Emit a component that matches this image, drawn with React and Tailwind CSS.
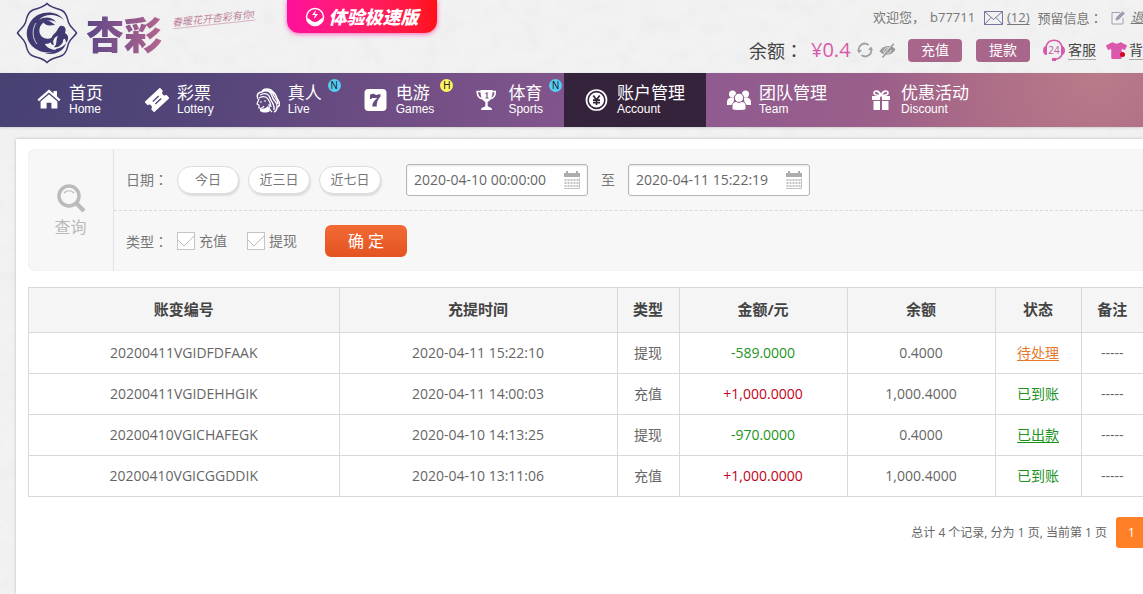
import React from 'react';
import { FaTshirt } from 'react-icons/fa';

function Texture() {
  return (
    <svg className="pointer-events-none absolute inset-0 h-full w-full opacity-50" aria-hidden="true">
      <filter id="paper" x="0" y="0" width="100%" height="100%">
        <feTurbulence type="fractalNoise" baseFrequency="0.05 0.06" numOctaves="4" seed="8" />
        <feColorMatrix values="0 0 0 0 0.84  0 0 0 0 0.84  0 0 0 0 0.84  2.4 0 0 0 -0.8" />
      </filter>
      <rect width="100%" height="100%" filter="url(#paper)" />
    </svg>
  );
}

function Emblem() {
  return (
    <svg className="size-[62px] shrink-0" viewBox="0 0 62 62" aria-hidden="true">
      <path
        d="M31 1.500C35 6 41 6 46 8.500C51 11 51 16 52.500 20.500C54 25 58 27 60.500 31C58 35 54 37 52.500 41.500C51 46 51 51 46 53.500C41 56 35 56 31 60.500C27 56 21 56 16 53.500C11 51 11 46 9.500 41.500C8 37 4 35 1.500 31C4 27 8 25 9.500 20.500C11 16 11 11 16 8.500C21 6 27 6 31 1.500Z"
        fill="none" stroke="#3f3a72" strokeWidth="1.500"
      />
      <path
        d="M48 18C41 8 23 8 15 19C6 32 12 46 27 50C32 51 38 50 42 48C36 48 31 46 29 42C34 42 38 39 39 33C37 36 32 38 28 36C22 33 22 25 27 21C30 18 36 18 40 20C37 15 28 14 23 18C28 12 40 11 48 18Z"
        fill="#3f3a72"
      />
      <path
        d="M44 24C48 23 51 26 49 31C53 33 53 38 50 41C50 36 47 35 47 40C45 43 43 46 38 45C42 42 39 39 42 34C38 35 36 39 38 43C33 43 34 36 38 32C41 30 41 27 44 24Z"
        fill="#3f3a72"
      />
      <path d="M27 20C31 17 36 20 39 23C34 23 31 25 27 20ZM40 47C45 46 48 44 50 41C48 50 37 54 29 51C34 51 38 50 40 47Z" fill="#3f3a72" />
      <path d="M20 21C16 27 16 36 21 42M33 45C31 44 30 43 29 42" fill="none" stroke="#f0f0f0" strokeWidth="0.800" />
    </svg>
  );
}

function HomeIcon() {
  return (
    <svg viewBox="0 0 24 24" className="size-6" fill="currentColor" aria-hidden="true">
      <path d="M12 1.500 0.500 11.500 2 13.200 12 4.600 22 13.200 23.500 11.500 20 8.400V3h-3.500v2.400Z" />
      <path d="M12 6.200 3.600 13.500V20.600h6v-5.800h4.800v5.800h6v-7.100Z" />
    </svg>
  );
}
function TicketIcon() {
  return (
    <svg viewBox="0 0 24 24" className="size-6" aria-hidden="true">
      <g transform="rotate(-43 12 12)">
        <path fill="#fff" d="M1.500 5h21v4.500a2.500 2.500 0 0 0 0 5v4.500h-21v-4.500a2.500 2.500 0 0 0 0-5Z" />
        <path d="M8 10.200h8M8 13.800h8" stroke="#544579" strokeWidth="1.400" />
      </g>
    </svg>
  );
}
function LiveIcon() {
  return (
    <svg viewBox="0 0 26 27" className="h-[27px] w-[26px] max-w-none shrink-0" fill="none" stroke="#fff" aria-hidden="true">
      <path d="M3 12C1 8 3 5 7 5c1-4 8-4 11 0 4 2 3 6 5 8 3 4 1 7-1 7 0 2-1 4-3 5" strokeWidth="1.500" />
      <path d="M7 5c5-3 9 0 10 4 1 5 5 5 5 10M5 8c5-3 9-1 10 3 1 4 5 5 4 12M4 11c4-2 7-2 9 1 2 3 3 5 3 8M8 3c5-1 10 2 11 6 2 3 4 4 4 8" strokeWidth="1.300" />
      <path d="M4 12 2 17l2 1v3c3 1 4 0 5-2M9 14l2 0M5 15l2 0M14 17c0 5 1 6 3 8" strokeWidth="1.200" />
      <path d="M5 21c3 2 6 0 8-2l2 5c-3 2-7 2-10 0Z" fill="#fff" stroke="none" />
    </svg>
  );
}
function SevenIcon() {
  return (
    <svg viewBox="0 0 24 24" className="size-6" aria-hidden="true">
      <rect x="0.500" y="1" width="22" height="22" rx="4" fill="#fff" />
      <path d="M6 6.500h1.200c.6-.8 2-.8 3.300-.2 1.700.8 2.700.8 4 0h2v2.200c-3 3.300-4 6-3.800 10H8.300c0-3.700 2-6 5.300-8.400-2.600.5-5.500-1-6.400.9H6Z" fill="#664b83" />
    </svg>
  );
}
function TrophyIcon() {
  return (
    <svg viewBox="0 0 24 24" className="size-6" aria-hidden="true">
      <path d="M5.500 3.500H1.200c0 4.500 2.300 7 5.800 7.300M15.500 3.500h3.800c0 4.500-2.300 7-5.800 7.300" fill="none" stroke="#fff" strokeWidth="1.600" />
      <path d="M4.500 2h12c.3 6-1.500 10.500-4.800 12v4.200c1 .7 3 .8 4.300 2.800v1H5v-1c1.300-2 3.300-2.100 4.300-2.800V14C6 12.500 4.200 8 4.500 2Z" fill="#fff" />
      <path d="M9.500 5.800 11 5v5M9.500 10h3" fill="none" stroke="#7e558b" strokeWidth="1.200" />
    </svg>
  );
}
function CoinIcon() {
  return (
    <svg viewBox="0 0 24 24" className="size-6" aria-hidden="true">
      <circle cx="11.500" cy="12" r="10" fill="none" stroke="#fff" strokeWidth="1.700" />
      <circle cx="11.500" cy="12" r="7.600" fill="#fff" />
      <path d="m8.300 7.500 3.200 4.500 3.200-4.500M11.500 12v5M8 12.200h7M8 14.600h7" fill="none" stroke="#35233c" strokeWidth="1.700" />
    </svg>
  );
}
function TeamIcon() {
  return (
    <svg viewBox="0 0 24 24" className="size-6" fill="#fff" aria-hidden="true">
      <circle cx="5.500" cy="6" r="3.500" />
      <circle cx="18.500" cy="6" r="3.500" />
      <path d="M0 17v-3c0-3 2-4.500 5-4.500h2L6.500 17ZM24 17v-3c0-3-2-4.500-5-4.500h-2l.5 7.500Z" />
      <g stroke="#90598f" strokeWidth="1">
        <path d="M5 21.500v-3.500c0-3.500 2.500-4.800 7-4.800s7 1.300 7 4.800v3.500c-2 1.300-12 1.300-14 0Z" />
        <circle cx="12" cy="9.800" r="4.600" />
      </g>
    </svg>
  );
}
function GiftIcon() {
  return (
    <svg viewBox="0 0 20 22" className="h-[22px] w-5" fill="#fff" aria-hidden="true">
      <path d="M1 7h8v4H1ZM11 7h8v4h-8ZM2.500 12H9v9H2.500ZM11 12h6.500v9H11Z" />
      <path d="M10 6.500C8 1 3 1 3 4c0 2 4 2.500 7 2.500s7-.5 7-2.500c0-3-5-3-7 2.500Z" fill="none" stroke="#fff" strokeWidth="1.700" />
    </svg>
  );
}

function RefreshIcon() {
  return (
    <svg viewBox="0 0 16 16" className="size-4" aria-hidden="true">
      <path d="M2 9.500A6 6 0 0 1 11.500 3M14 6.500A6 6 0 0 1 4.500 13" fill="none" stroke="#a0a0a0" strokeWidth="1.800" />
      <path d="M0 8h5L2 11.500ZM16 8h-5l3-3.500Z" fill="#a0a0a0" />
    </svg>
  );
}
function HiddenIcon() {
  return (
    <svg viewBox="0 0 17 15" className="h-[15px] w-[17px]" aria-hidden="true">
      <path d="M.5 8C4 2 13 1 16.500 6.500 13 13 4 13.500.5 8Z" fill="#9a9a9a" />
      <path d="M5 9.500C4 6.500 7 4 9.500 5M8 10c2 .5 4-1 4-3" fill="none" stroke="#eee" strokeWidth="1" />
      <path d="m2 15 12-14.500" stroke="#eee" strokeWidth="1.400" />
      <path d="M3.500 14.500 14.800.8" stroke="#9a9a9a" strokeWidth="1.500" />
    </svg>
  );
}
function CalendarIcon() {
  return (
    <svg viewBox="0 0 16 18" className="h-[18px] w-4 shrink-0" aria-hidden="true">
      <path d="M0 2h2V0h2v2h8V0h2v2h2v4H0Z" fill="#adadad" />
      <path d="M1.500 8v9M4.500 8v9M7.500 8v9M10.500 8v9M13.500 8v9" fill="none" stroke="#c4c4c4" strokeWidth="2" strokeDasharray="2 1" />
      <path d="M0 17.500h15.500V7" fill="none" stroke="#c4c4c4" />
    </svg>
  );
}

function Label({ children }) {
  return (
    <>
      {children}
      <span className="font-['Noto_Sans_CJK_TC']">：</span>
    </>
  );
}

const nav = [
  { title: '首页', sub: 'Home', icon: <HomeIcon /> },
  { title: '彩票', sub: 'Lottery', icon: <TicketIcon /> },
  { title: '真人', sub: 'Live', icon: <LiveIcon />, badge: 'N' },
  { title: '电游', sub: 'Games', icon: <SevenIcon />, badge: 'H' },
  { title: '体育', sub: 'Sports', icon: <TrophyIcon />, badge: 'N' },
  { title: '账户管理', sub: 'Account', icon: <CoinIcon />, active: true },
  { title: '团队管理', sub: 'Team', icon: <TeamIcon /> },
  { title: '优惠活动', sub: 'Discount', icon: <GiftIcon /> },
];

const rows = [
  ['20200411VGIDFDFAAK', '2020-04-11 15:22:10', '提现', '-589.0000', '0.4000', '待处理'],
  ['20200411VGIDEHHGIK', '2020-04-11 14:00:03', '充值', '+1,000.0000', '1,000.4000', '已到账'],
  ['20200410VGICHAFEGK', '2020-04-10 14:13:25', '提现', '-970.0000', '0.4000', '已出款'],
  ['20200410VGICGGDDIK', '2020-04-10 13:11:06', '充值', '+1,000.0000', '1,000.4000', '已到账'],
];

function Header() {
  return (
    <header className="relative flex h-[73px] items-start overflow-hidden whitespace-nowrap">
      <a href="#home" aria-label="杏彩" className="flex shrink-0 items-start pt-0.5 pl-4">
        <Emblem />
        <span className="ml-2 bg-linear-to-r from-[#5d4686] to-[#b5658f] bg-clip-text pt-1 text-[38px] leading-[56px] font-black text-transparent">杏彩</span>
        <span className="mt-2.5 ml-2.5 -rotate-6 border-b border-[#d9b3c4] text-[10px] leading-3 text-[#c08299] italic">春暖花开杏彩有你!</span>
      </a>
      <button className="ml-8 flex h-[33px] w-[150px] shrink-0 items-center justify-center gap-1 rounded-b-xl bg-linear-to-r from-[#ff0f9b] to-[#ff1212] text-lg font-black text-white italic shadow-[0_1px_5px_#ff5fbd]">
        <svg viewBox="0 0 20 20" className="size-5" aria-hidden="true">
          <circle cx="10" cy="10" r="8.500" fill="none" stroke="#fff" strokeWidth="1.500" />
          <path d="M2 11c3 0 4 4 8 4s5-4 8-4c-1 5-4 7-8 7s-7-2-8-7Z" fill="#fff" />
          <path d="m11 3-4 5h3l-1 4 4-5h-3Z" fill="#fff" />
        </svg>
        体验极速版
      </button>
      <div className="ml-auto w-[394px] shrink-0 pt-2">
        <div className="flex h-5 items-center pl-[124px] text-[13px] text-[#777] *:shrink-0">
          <span className="w-[57px]">欢迎您，</span>
          <span className="w-[54px]">b77711</span>
          <svg viewBox="0 0 19 14" className="mr-1 h-3.5 w-[19px]" fill="none" stroke="#77749f" aria-hidden="true">
            <path d="M.5.500h18v13H.5ZM.5.500l9 8 9-8M.5 13.500l6.500-7M18.500 13.500 12 6.500" />
          </svg>
          <a href="#messages" className="mr-2 underline underline-offset-2">(12)</a>
          <span className="w-[73px]"><Label>预留信息</Label></span>
          <svg viewBox="0 0 14 14" className="mr-1.5 size-3.5" fill="none" stroke="#a0a0b4" aria-hidden="true">
            <path d="M9 1.500H1v11.500h11V7" />
            <path d="m5 9 .5-2.500L11.500.700l1.800 1.800L7.500 8.500Z" fill="#a0a0b4" />
          </svg>
          <a href="#edit" className="italic underline">退</a>
        </div>
        <div className="mt-2 flex h-7 items-center text-[#444] *:shrink-0">
          <span className="w-[62px] text-lg"><Label>余额</Label></span>
          <span className="mr-1.5 w-10 text-xl text-[#d959aa]">¥0.4</span>
          <button aria-label="刷新" className="mr-1.5"><RefreshIcon /></button>
          <button aria-label="隐藏余额"><HiddenIcon /></button>
          <button className="ml-3 h-[23px] w-[54px] rounded bg-[#a9668b] text-sm leading-none text-white">充值</button>
          <button className="ml-3.5 h-[23px] w-[54px] rounded bg-[#a9668b] text-sm leading-none text-white">提款</button>
          <a href="#service" className="ml-[13px] flex items-center gap-[3px] text-sm">
            <svg viewBox="0 0 22 23" className="h-[23px] w-[22px]" aria-hidden="true">
              <path d="M3 8C5-1 17-1 19 8v7c-1 4-4 5-7 5.500" fill="none" stroke="#d65aaa" strokeWidth="1.500" />
              <path d="M4 7v9C1 16 0 14 0 11.500S1 7 4 7ZM18 7v9c3 0 4-2 4-4.500S21 7 18 7ZM9 19h4v3H9Z" fill="#d65aaa" />
              <text x="11" y="15" textAnchor="middle" fontSize="10" fill="#c25aa0" fontFamily="Open Sans">24</text>
            </svg>
            <span className="border-b border-[#aaa] leading-[18px]">客服</span>
          </a>
          <a href="#theme" className="relative ml-2.5 flex items-center gap-0.5 text-sm">
            <FaTshirt className="size-[21px] text-[#dc58ad]" />
            <span className="absolute top-3 left-3.5 size-[5px] rounded-full bg-[#d9001b]" />
            <span className="border-b border-[#aaa] leading-[18px]">背</span>
          </a>
        </div>
      </div>
    </header>
  );
}

function Nav() {
  return (
    <nav className="relative flex h-[54px] overflow-hidden bg-[radial-gradient(circle_at_96%_0%,#b97a89_0%,#b97a8900_20%),linear-gradient(100deg,#474174_0%,#544579_18%,#704e85_35%,#8e5a90_60%,#a16187_85%,#a26386_100%)] pl-4 shadow-sm">
      {nav.map((n) => (
        <a key={n.sub} href={'#' + n.sub} className={'relative flex shrink-0 items-center px-[21px] text-white ' + (n.active ? 'bg-[#35233c]' : '')}>
          <span className="mr-2 flex w-6 justify-center">{n.icon}</span>
          <span className="flex flex-col">
            <span className="text-[17px] leading-[18px]">{n.title}</span>
            <span className="font-['Liberation_Sans'] text-xs leading-3.5">{n.sub}</span>
          </span>
          {n.badge && (
            <span className={'absolute top-1.5 right-0.5 flex size-[13px] items-center justify-center rounded-full font-["Liberation_Sans"] text-[10px] leading-none text-[#223] ' + (n.badge === 'H' ? 'bg-[#fff45c]' : 'bg-[#55cdf2]')}>
              {n.badge}
            </span>
          )}
        </a>
      ))}
    </nav>
  );
}

function DateField({ id, label, value }) {
  return (
    <div className="flex h-8 w-[182px] shrink-0 items-center rounded-[3px] border border-[#b5b5b5] bg-white px-[7px] shadow-[inset_0_1px_2px_#e5e5e5]">
      <input id={id} aria-label={label} defaultValue={value} className="w-0 flex-1 bg-transparent text-sm text-[#666] outline-none" />
      <CalendarIcon />
    </div>
  );
}

function Check({ label }) {
  return (
    <label className="flex items-center gap-1">
      <span className="relative flex size-[18px]">
        <input type="checkbox" defaultChecked className="peer size-[18px] appearance-none border border-[#c4c4c4] bg-white" />
        <svg viewBox="0 0 18 18" className="pointer-events-none absolute inset-0 hidden peer-checked:block" fill="none" stroke="#bbb" aria-hidden="true">
          <path d="m1 8 6 6L17 4" />
        </svg>
      </span>
      {label}
    </label>
  );
}

function Filters() {
  return (
    <form className="flex rounded-l-lg bg-[#f7f7f7] shadow-[inset_0_0_1px_#ccc]" onSubmit={(e) => e.preventDefault()}>
      <div className="flex w-[86px] shrink-0 flex-col items-center justify-center border-r border-[#e2e2e2] text-base leading-5 text-[#bbb]">
        <svg viewBox="0 0 30 30" className="mb-1 size-[30px]" fill="none" stroke="#bbb" aria-hidden="true">
          <circle cx="13" cy="13" r="10" strokeWidth="3.500" />
          <path d="m20 20 8 8" strokeWidth="4.500" />
          <path d="M8 10c3-3 7-3 10 0" strokeWidth="1.200" />
        </svg>
        查询
      </div>
      <div className="min-w-0 flex-1 text-sm whitespace-nowrap text-[#777]">
        <div className="flex h-[62px] items-center border-b border-dashed border-[#d8d8d8] pl-3">
          <span className="w-[51px] shrink-0"><Label>日期</Label></span>
          <div className="flex gap-[9px]">
            {['今日', '近三日', '近七日'].map((t) => (
              <button key={t} type="button" className="h-7 w-[62px] rounded-full border border-[#ddd] bg-white text-[13px] shadow-[1px_2px_2px_#ddd]">{t}</button>
            ))}
          </div>
          <div className="ml-[25px] flex items-center gap-[13px]">
            <DateField id="from" label="开始时间" value="2020-04-10 00:00:00" />
            <span>至</span>
            <DateField id="to" label="结束时间" value="2020-04-11 15:22:19" />
          </div>
        </div>
        <div className="flex h-[60px] items-center pl-3">
          <span className="w-[51px] shrink-0"><Label>类型</Label></span>
          <div className="flex gap-5">
            <Check label="充值" />
            <Check label="提现" />
          </div>
          <button className="ml-7 h-8 w-[82px] rounded-md bg-linear-to-b from-[#f26a35] to-[#e2531f] text-base text-white">确 定</button>
        </div>
      </div>
    </form>
  );
}

function Records() {
  return (
    <table className="mt-4 w-full table-fixed border-collapse text-center text-sm text-[#666]">
      <thead>
        <tr className="h-[45px] bg-[#f5f5f5] text-[15px] text-[#444] *:border *:border-[#d9d9d9] *:last:border-r-0">
          <th>账变编号</th>
          <th className="w-[278px]">充提时间</th>
          <th className="w-[62px]">类型</th>
          <th className="w-[168px]">金额/元</th>
          <th className="w-[148px]">余额</th>
          <th className="w-[86px]">状态</th>
          <th className="w-[62px]">备注</th>
        </tr>
      </thead>
      <tbody>
        {rows.map(([no, time, type, amount, balance, status]) => (
          <tr key={no} className="h-[41px] bg-white *:border *:border-[#d9d9d9] *:last:border-r-0">
            <td>{no}</td>
            <td>{time}</td>
            <td>{type}</td>
            <td className={amount[0] === '+' ? 'text-[#c4001a]' : 'text-[#1d931d]'}>{amount}</td>
            <td>{balance}</td>
            <td className={status === '待处理' ? 'text-[#e8792b]' : 'text-[#1d931d]'}>
              {type === '提现' ? <a href={'#' + no} className="underline underline-offset-2">{status}</a> : status}
            </td>
            <td>-----</td>
          </tr>
        ))}
      </tbody>
    </table>
  );
}

export default function App() {
  return (
    <div className="relative flex min-h-screen flex-col overflow-hidden bg-[#f2f2f2] font-['Open_Sans','Noto_Sans_CJK_SC',sans-serif]">
      <Texture />
      <Header />
      <Nav />
      <main className="relative mt-3 ml-4 flex-1 bg-white pt-2.5 pl-3 shadow-[0_0_3px_#bbb]">
        <Filters />
        <Records />
        <div className="mt-5 -mr-1 flex items-center justify-end gap-[9px] text-xs text-[#666]">
          <span>总计 4 个记录, 分为 1 页, 当前第 1 页</span>
          <button className="h-[31px] w-[31px] rounded-[3px] bg-[#ff8026] text-white">1</button>
        </div>
      </main>
    </div>
  );
}
